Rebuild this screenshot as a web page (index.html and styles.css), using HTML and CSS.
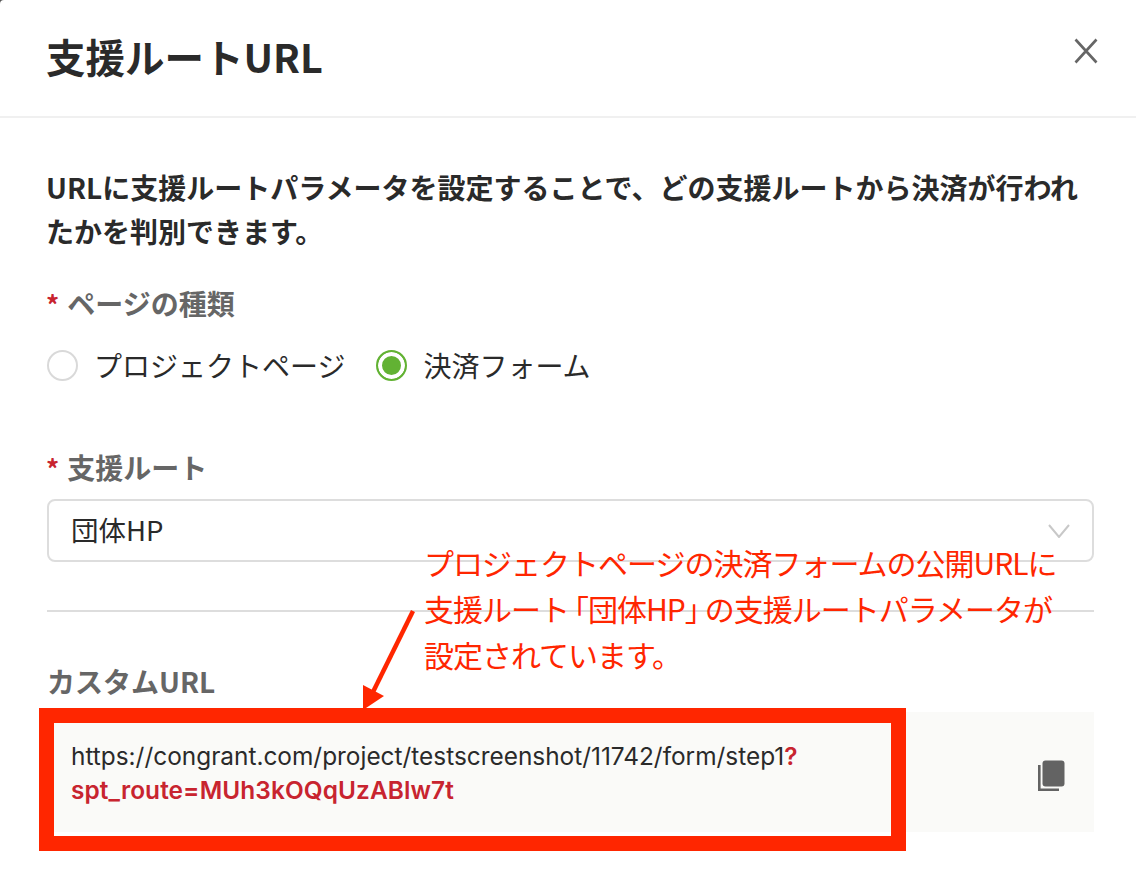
FILE: index.html
```html
<!DOCTYPE html>
<html lang="ja">
<head>
<meta charset="utf-8">
<title>支援ルートURL</title>
<link rel="stylesheet" href="styles.css">
</head>
<body>
<div class="modal">
  <header class="header">
    <h1 class="title">支援ルートURL</h1>
    <svg class="close" width="24" height="26" viewBox="0 0 24 26"><path d="M1.5 1.5 22.5 24.5M22.5 1.5 1.5 24.5" fill="none" stroke="#666" stroke-width="2.6"/></svg>
  </header>
  <main class="content">
    <p class="intro">URLに支援ルートパラメータを設定することで、どの支援ルートから決済が行われたかを判別できます。</p>
    <div class="label label-first"><span class="star">*</span>ページの種類</div>
    <div class="radios">
      <span class="radio"><span class="dot"></span>プロジェクトページ</span>
      <span class="radio"><span class="dot dot-on"></span>決済フォーム</span>
    </div>
    <div class="label label-route"><span class="star">*</span>支援ルート</div>
    <div class="select">
      <span class="select-value">団体HP</span>
      <svg width="22" height="14" viewBox="0 0 22 14"><path d="M1 1 11 13 21 1" fill="none" stroke="#c8c8c8" stroke-width="2"/></svg>
    </div>
    <hr class="divider">
    <div class="label label-url">カスタムURL</div>
    <div class="url-box">
      <div class="url-text">https://congrant.com/project/testscreenshot/11742/form/step1<b class="param">?<br>spt_route=MUh3kOQqUzABlw7t</b></div>
      <svg class="copy" width="28" height="31" viewBox="0 0 28 31"><rect x="4.5" y="0.5" width="22" height="26" rx="3" fill="#636363"/><path d="M1.3 5V29.7H21" fill="none" stroke="#636363" stroke-width="2.6"/></svg>
      <div class="highlight"></div>
    </div>
  </main>
  <p class="note">プロジェクトページの決済フォームの公開URLに<br>支援ルート<span class="bracket bracket-open">「</span>団体HP<span class="bracket">」</span>の支援ルートパラメータが<br>設定されています。</p>
  <svg class="arrow" width="60" height="105" viewBox="0 0 60 105"><path d="M51 1 10 84" fill="none" stroke="#ff2600" stroke-width="4.5"/><path d="M1 75 22 86 1 100Z" fill="#ff2600"/></svg>
</div>
</body>
</html>
```
FILE: styles.css
```css
* { box-sizing: border-box; }
html, body { margin: 0; }
body {
  width: 1136px;
  height: 870px;
  overflow: hidden;
  background: #555;
  font-family: "Noto Sans CJK JP", "Noto Sans", sans-serif;
  color: #2a2a2a;
}
.modal { position: relative; height: 870px; background: #fff; border-top-left-radius: 4px; }
.header {
  height: 118px;
  padding: 0 38px 0 47px;
  display: flex;
  align-items: center;
  justify-content: space-between;
  border-bottom: 2px solid #f0f0f0;
}
.title { margin: 0 0 5px -1px; font-size: 39.5px; font-weight: 700; line-height: 50px; }
.close { margin-top: -14px; }
.content { padding: 47px 42px 0 47px; }
.intro { margin: 0 0 0 -1px; font-size: 28px; line-height: 44px; font-weight: 700; }
.label { font-size: 28px; font-weight: 700; line-height: 40px; color: #666; }
.label-first { margin-top: 30px; }
.label-route { margin-top: 62px; }
.label-url { margin-top: 49px; }
.star { color: #c8242f; margin: 0 8px 0 -1px; font-size: 26px; line-height: 0; }
.radios { display: flex; gap: 31px; margin-top: 22px; }
.radio { display: flex; align-items: center; gap: 16px; font-size: 28px; line-height: 40px; font-weight: 400; }
.dot { width: 31px; height: 31px; border-radius: 50%; border: 2px solid #d9d9d9; background: #fff; }
.dot-on { border-color: #62b233; background: #62b233; box-shadow: inset 0 0 0 4px #fff; }
.select {
  margin-top: 12px;
  height: 63px;
  padding: 0 22px;
  display: flex;
  align-items: center;
  justify-content: space-between;
  border: 2px solid #ddd;
  border-radius: 8px;
  font-size: 27.5px;
}
.select-value { margin-bottom: 4px; }
.divider { margin: 48px 0 0; border: 0; height: 2px; background: #ddd; }
.url-box {
  position: relative;
  margin-top: 11px;
  height: 120px;
  padding: 27px 28px 0 24px;
  display: flex;
  justify-content: space-between;
  background: #fafaf8;
}
.url-text { font-family: Inter, "Noto Sans", sans-serif; font-size: 24.4px; line-height: 34px; }
.param { color: #c8242f; font-weight: 600; letter-spacing: 0.1px; }
.copy { margin-top: 21px; }
.highlight {
  position: absolute;
  left: -8px;
  top: -4px;
  width: 867px;
  height: 143px;
  border: 15px solid #ff2600;
}
.note {
  position: absolute;
  left: 424px;
  top: 539px;
  margin: 0;
  font-size: 30px;
  letter-spacing: -1px;
  line-height: 46px;
  color: #ff2600;
  font-weight: 400;
  white-space: nowrap;
}
.bracket { font-feature-settings: "halt"; letter-spacing: 5px; }
.bracket-open { letter-spacing: -1px; margin-left: 5px; }
.arrow { position: absolute; left: 362px; top: 610px; }
```
